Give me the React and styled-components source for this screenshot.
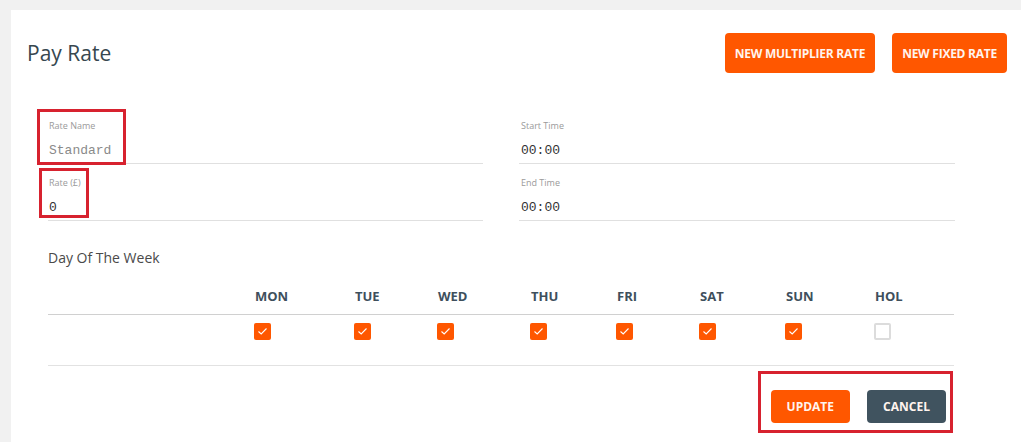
import React from "react";
import styled, { createGlobalStyle } from "styled-components";

const GlobalStyle = createGlobalStyle`
  html, body { margin: 0; padding: 0; background: #f1f1f1; }
  body { font-family: "Open Sans", "Liberation Sans", sans-serif; }
  * { box-sizing: border-box; }
`;

const Card = styled.div`
  margin: 10px 0 0 11px;
  background: #ffffff;
  padding: 23px 14px 20px 16px;
  min-height: 432px;
`;

const Header = styled.div`
  display: flex;
  align-items: center;
  justify-content: space-between;
  height: 40px;
`;

const Title = styled.h1`
  margin: 0;
  font-size: 21px;
  font-weight: 400;
  color: #37474f;
`;

const Actions = styled.div`
  display: flex;
  gap: 17px;
`;

const Button = styled.button`
  border: none;
  border-radius: 4px;
  background: ${(p) => (p.$variant === "dark" ? "#40535f" : "#ff5700")};
  color: #fff4ee;
  font-family: "Open Sans", "Liberation Sans", sans-serif;
  font-weight: 700;
  font-size: 12px;
  letter-spacing: ${(p) => (p.$small ? "0" : "-0.25px")};
  height: ${(p) => (p.$small ? "33px" : "40px")};
  padding: 0 ${(p) => (p.$small ? "16px" : "10px")};
  min-width: ${(p) => (p.$small ? "79px" : "0")};
  cursor: pointer;
  white-space: nowrap;
`;

const Body = styled.div`
  padding-left: 21px;
  width: 944px;
  margin-top: 34px;
`;

const FormGrid = styled.div`
  display: grid;
  grid-template-columns: 435px 436px;
  column-gap: 36px;
`;

const Column = styled.div`
  display: flex;
  flex-direction: column;
`;

const Field = styled.div`
  position: relative;
  height: 57px;
  padding: 12px 0 0 ${(p) => (p.$indent ? "2px" : "1px")};
  border-bottom: 1px solid #e0e0e0;
`;

const Label = styled.div`
  font-size: 9px;
  line-height: 14px;
  color: #9a9a9a;
`;

const Value = styled.div`
  margin-top: 8px;
  font-family: "Liberation Mono", "DejaVu Sans Mono", monospace;
  font-size: 13px;
  line-height: 20px;
  color: ${(p) => (p.$muted ? "#8a8a8a" : "#333333")};
`;

const Highlight = styled.div`
  position: absolute;
  border: 3px solid #d7222f;
  pointer-events: none;
`;

const SectionTitle = styled.div`
  margin-top: 27px;
  font-size: 14px;
  line-height: 20px;
  color: #4a4a4a;
`;

const DayTable = styled.div`
  margin-top: 10px;
  width: 906px;
`;

const DayRow = styled.div`
  display: grid;
  grid-template-columns: 207px 100px 83px 93px 86px 83px 86px 89px 79px;
  height: ${(p) => (p.$header ? "37px" : "51px")};
  align-items: ${(p) => (p.$header ? "center" : "start")};
  padding-top: ${(p) => (p.$header ? "0" : "8px")};
  border-bottom: 1px solid ${(p) => (p.$header ? "#d0d0d0" : "#e2e2e2")};
`;

const DayHead = styled.div`
  font-size: 13px;
  font-weight: 700;
  color: #3e4f5c;
`;

const Check = styled.div`
  width: 17px;
  height: 17px;
  border-radius: 2px;
  display: flex;
  align-items: center;
  justify-content: center;
  background: ${(p) => (p.$checked ? "#ff5700" : "#ffffff")};
  border: ${(p) => (p.$checked ? "none" : "2px solid #dcdcdc")};
  margin-left: -1px;
`;

const Footer = styled.div`
  display: flex;
  justify-content: flex-end;
  margin-top: 24px;
  width: 898px;
`;

const FooterActions = styled.div`
  position: relative;
  display: flex;
  gap: 17px;
`;

const CheckMark = () => (
  <svg width="11" height="9" viewBox="0 0 11 9">
    <path d="M1.5 4.5 L4.2 7 L9.5 1.5" fill="none" stroke="#ffffff" strokeWidth="1.1" />
  </svg>
);

const days = [
  { name: "MON", on: true },
  { name: "TUE", on: true },
  { name: "WED", on: true },
  { name: "THU", on: true },
  { name: "FRI", on: true },
  { name: "SAT", on: true },
  { name: "SUN", on: true },
  { name: "HOL", on: false },
];

export default function App() {
  return (
    <>
      <GlobalStyle />
      <Card>
        <Header>
          <Title>Pay Rate</Title>
          <Actions>
            <Button>NEW MULTIPLIER RATE</Button>
            <Button>NEW FIXED RATE</Button>
          </Actions>
        </Header>
        <Body>
          <FormGrid>
            <Column>
              <Field>
                <Label>Rate Name</Label>
                <Value $muted>Standard</Value>
                <Highlight style={{ left: -11, top: 2, width: 89, height: 56 }} />
              </Field>
              <Field>
                <Label>Rate (£)</Label>
                <Value>0</Value>
                <Highlight style={{ left: -9, top: 4, width: 50, height: 50 }} />
              </Field>
            </Column>
            <Column>
              <Field $indent>
                <Label>Start Time</Label>
                <Value>00:00</Value>
              </Field>
              <Field $indent>
                <Label>End Time</Label>
                <Value>00:00</Value>
              </Field>
            </Column>
          </FormGrid>
          <SectionTitle>Day Of The Week</SectionTitle>
          <DayTable>
            <DayRow $header>
              <div />
              {days.map((d) => (
                <DayHead key={d.name}>{d.name}</DayHead>
              ))}
            </DayRow>
            <DayRow>
              <div />
              {days.map((d) => (
                <Check key={d.name} $checked={d.on}>
                  {d.on && <CheckMark />}
                </Check>
              ))}
            </DayRow>
          </DayTable>
          <Footer>
            <FooterActions>
              <Button $small>UPDATE</Button>
              <Button $small $variant="dark">CANCEL</Button>
              <Highlight style={{ left: -13, top: -19, width: 195, height: 62 }} />
            </FooterActions>
          </Footer>
        </Body>
      </Card>
    </>
  );
}
